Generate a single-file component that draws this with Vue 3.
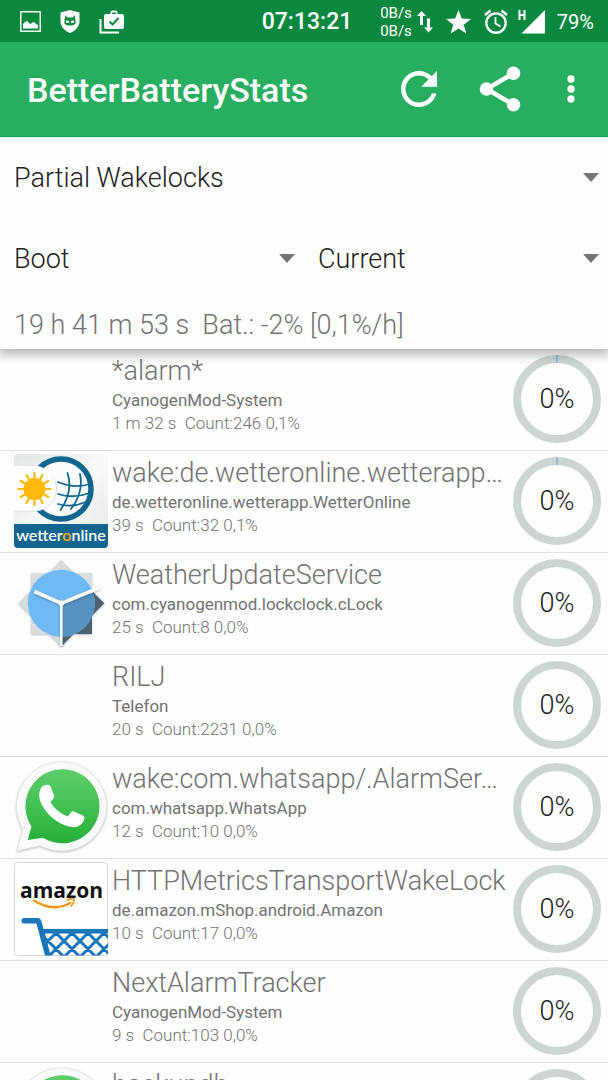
<script setup>
import { ref } from 'vue'

const stat = ref('Partial Wakelocks')
const from = ref('Boot')
const to = ref('Current')
const since = '19 h 41 m 53 s  Bat.: -2% [0,1%/h]'

const rows = [
  { title: '*alarm*', app: 'CyanogenMod-System', detail: '1 m 32 s  Count:246 0,1%', tick: true },
  { title: 'wake:de.wetteronline.wetterapp…', app: 'de.wetteronline.wetterapp.WetterOnline', detail: '39 s  Count:32 0,1%', icon: 'wetter', tick: true },
  { title: 'WeatherUpdateService', app: 'com.cyanogenmod.lockclock.cLock', detail: '25 s  Count:8 0,0%', icon: 'clock' },
  { title: 'RILJ', app: 'Telefon', detail: '20 s  Count:2231 0,0%' },
  { title: 'wake:com.whatsapp/.AlarmSer…', app: 'com.whatsapp.WhatsApp', detail: '12 s  Count:10 0,0%', icon: 'whatsapp' },
  { title: 'HTTPMetricsTransportWakeLock', app: 'de.amazon.mShop.android.Amazon', detail: '10 s  Count:17 0,0%', icon: 'amazon' },
  { title: 'NextAlarmTracker', app: 'CyanogenMod-System', detail: '9 s  Count:103 0,0%' },
  { title: 'backupdb', icon: 'whatsapp' },
]
const rays = Array.from({ length: 12 }, (_, i) => i * 30)
</script>

<template>
  <div class="screen">
    <div class="status">
      <div class="notes">
        <svg width="21" height="21" viewBox="0 0 21 21"><rect x=".8" y=".8" width="19.4" height="19.4" fill="none" stroke="#fff" stroke-width="1.4" /><path d="M3 17.500V13l2-2 2-1 3 3 2-1 2-1 2 2 2 1v3.500z" fill="#fff" /></svg>
        <svg width="20" height="23" viewBox="0 0 20 23"><path d="M10 0l9.500 2.500V11c0 5.500-4 10-9.500 12C4.500 21 .5 16.500.5 11V2.500z" fill="#fff" /><path d="M4.500 14V9.500L5.500 5l1.700 2.500h5.600L14.500 5l1 4.500V14q-5.500 3-11 0z" fill="#0b883f" /><path d="M6 10.300l3 .7v1.700H6zM14 10.300l-3 .7v1.700h3z" fill="#fff" /></svg>
        <svg width="26" height="24" viewBox="0 0 26 24"><path d="M1.500 9v13.500H20" fill="none" stroke="#fff" stroke-width="2" /><path fill-rule="evenodd" d="M7 4h4.500V2.500Q11.500.5 13.500.5h3q2 0 2 2V4H23q2 0 2 2v11q0 2-2 2H7q-2 0-2-2V6q0-2 2-2zm6.200 0h3.600V2.500h-3.600z" fill="#fff" /><path d="M10.500 11.500l3 3 6-6.500" fill="none" stroke="#0b883f" stroke-width="2" /></svg>
      </div>
      <time class="clock">07:13:21</time>
      <div class="system">
        <span class="speed">0B/s<br>0B/s</span>
        <svg class="arrows" width="16" height="22" viewBox="0 0 16 22"><path d="M4.500 0L9 5H6v9H3V5H0zM11.500 21.500L7 16.500h3v-9h3v9h3z" fill="#fff" /></svg>
        <svg class="star" width="25" height="24" viewBox="0 0 25 24"><path d="M12.500 0l3.300 8.600 9.200.4-7.200 5.700L20.200 23.500l-7.700-5.100-7.700 5.100 2.400-8.800L0 9l9.200-.4z" fill="#fff" /></svg>
        <svg class="alarm" width="24" height="25" viewBox="0 0 24 25"><circle cx="12" cy="14" r="9.700" fill="none" stroke="#fff" stroke-width="2.300" /><path d="M1 6l5.500-4.500M23 6l-5.500-4.500" stroke="#fff" stroke-width="2.300" /><path d="M11.500 8v6.500l5 3" fill="none" stroke="#fff" stroke-width="1.800" /></svg>
        <svg class="signal" width="28" height="25" viewBox="0 0 28 25"><path d="M27 1v23.500H3.500z" fill="#fff" /><path d="M1.500 1v10M6.500 1v10M1.500 6h5" fill="none" stroke="#fff" stroke-width="2" /></svg>
        <span class="level">79%</span>
      </div>
    </div>

    <header class="toolbar">
      <h1>BetterBatteryStats</h1>
      <button type="button" aria-label="Refresh"><svg width="54" height="54" viewBox="0 0 24 24"><path fill="#fff" d="M17.650 6.350C16.200 4.900 14.210 4 12 4c-4.420 0-7.990 3.580-7.990 8s3.570 8 7.990 8c3.730 0 6.840-2.550 7.730-6h-2.080c-.820 2.330-3.040 4-5.650 4-3.310 0-6-2.690-6-6s2.690-6 6-6c1.660 0 3.140.690 4.220 1.780L13 11h7V4l-2.350 2.350z" /></svg></button>
      <button type="button" aria-label="Share"><svg width="54" height="54" viewBox="0 0 24 24"><path d="M18 5L6 12l12 7" fill="none" stroke="#fff" stroke-width="2" /><g fill="#fff"><circle cx="18" cy="5" r="3" /><circle cx="6" cy="12" r="3" /><circle cx="18" cy="19" r="3" /></g></svg></button>
      <button type="button" class="more" aria-label="More options"><svg width="40" height="40" viewBox="0 0 24 24" fill="#fff"><circle cx="12" cy="6" r="2.200" /><circle cx="12" cy="12" r="2.200" /><circle cx="12" cy="18" r="2.200" /></svg></button>
    </header>

    <section class="filters">
      <label class="pick">
        <select v-model="stat" aria-label="Statistic"><option>Partial Wakelocks</option></select>
        <svg width="16" height="9" viewBox="0 0 16 9"><path d="M0 0h16L8 9z" fill="#757575" /></svg>
      </label>
      <div class="pair">
        <label class="pick">
          <select v-model="from" aria-label="From"><option>Boot</option></select>
          <svg width="16" height="9" viewBox="0 0 16 9"><path d="M0 0h16L8 9z" fill="#757575" /></svg>
        </label>
        <label class="pick">
          <select v-model="to" aria-label="To"><option>Current</option></select>
          <svg width="16" height="9" viewBox="0 0 16 9"><path d="M0 0h16L8 9z" fill="#757575" /></svg>
        </label>
      </div>
      <p class="since">{{ since }}</p>
    </section>

    <ul class="list">
      <li v-for="row in rows" :key="row.title" class="row">
        <div class="icon">
          <svg v-if="row.icon === 'wetter'" width="94" height="94" viewBox="0 0 94 94">
            <defs>
              <clipPath id="tile"><rect width="94" height="94" rx="4" /></clipPath>
              <linearGradient id="sky" x1="0" y1="0" x2="1" y2="1"><stop offset="0" stop-color="#e2e6e6" /><stop offset=".5" stop-color="#f8f9f9" /><stop offset="1" stop-color="#e6e9e9" /></linearGradient>
            </defs>
            <g clip-path="url(#tile)">
              <rect width="94" height="94" fill="url(#sky)" />
              <circle cx="47" cy="35" r="30" fill="#fbfcfc" stroke="#12658f" stroke-width="5.500" />
              <path d="M-2 13H20.500a22 22 0 0 1 0 44H-2z" fill="#fff" stroke="#dde1e1" stroke-width="1" />
              <path d="M-2 13.500H24q8 2 13 9" fill="none" stroke="#fff" stroke-width="3" />
              <g fill="none" stroke="#12658f" stroke-width="1.800" stroke-linecap="round">
                <path d="M53.500 19q6 18-7 37M66 20q4 18-9 35" />
                <path d="M44 28q16 7 32 2M44 40q15 5 32-1M44 50q14 4 28-2" />
              </g>
              <circle cx="20.500" cy="35" r="11" fill="#ffb90a" />
              <path v-for="a in rays" :key="a" d="M20.500 26V19" :transform="`rotate(${a} 20.500 35)`" stroke="#ffb90a" stroke-width="2.200" stroke-linecap="round" />
              <rect y="70" width="94" height="24" fill="#12658f" />
              <text x="47" y="87" class="wetter-name">wetter<tspan fill="#f5b013">o</tspan>nline</text>
            </g>
          </svg>

          <svg v-else-if="row.icon === 'clock'" width="94" height="94" viewBox="0 0 94 94">
            <defs><clipPath id="sector"><path d="M47.300 47.300L98 27v67H47.300z" /></clipPath></defs>
            <g class="lift"><path d="M47.300 4L90.300 47.300 47.300 90.500 4.300 47.300z" fill="#d7dbdc" /><rect x="17" y="17" width="61" height="61" fill="#d9ddde" /></g>
            <g clip-path="url(#sector)" fill="#4b626e"><path d="M47.300 4L90.300 47.300 47.300 90.500 4.300 47.300z" /><rect x="17" y="17" width="61" height="61" /></g>
            <circle cx="47.300" cy="47.300" r="33.500" fill="#6fb9f5" />
            <circle cx="47.300" cy="47.300" r="33.500" fill="#5693c3" clip-path="url(#sector)" />
            <g class="lift" stroke="#fafafa" fill="#fafafa"><path d="M20.500 35.500l26.800 11.800L86 31.500" fill="none" stroke-width="3.600" /><path d="M47.300 47.300V90" stroke-width="2.600" /><circle cx="47.300" cy="47.300" r="2.500" /></g>
          </svg>

          <svg v-else-if="row.icon === 'whatsapp'" width="94" height="94" viewBox="0 0 94 94">
            <defs><linearGradient id="green" x1="0" y1="0" x2="0" y2="1"><stop offset="0" stop-color="#5fcd6c" /><stop offset=".5" stop-color="#43c152" /><stop offset="1" stop-color="#25af3a" /></linearGradient></defs>
            <path class="lift" d="M3 91L8.700 69A45 44.500 0 1 1 26 85.500z" fill="#f9fafa" stroke="#dfe2e2" stroke-width=".7" />
            <path d="M13.700 80L17.500 66.500A37 37 0 1 1 29 77.700z" fill="url(#green)" />
            <path d="M29 26q2-1.500 5.500-1.200 1.500.2 2.300 2.200l3.300 8.500q.5 1.500-.7 3l-3 3.500q4.500 9 17.300 14.500l3.600-4.500q1.200-1.300 2.600-.6l9.500 4.300q1.500.8 1 2.300-.7 4-3.400 6.500-3.500 3-8 2.800-14-2-24-12.500-10.500-12-9.800-20 .3-6 3.800-8.800z" fill="#fff" />
          </svg>

          <svg v-else-if="row.icon === 'amazon'" width="94" height="94" viewBox="0 0 94 94">
            <defs><clipPath id="basket"><path d="M29 67h66v26.500H36z" /></clipPath></defs>
            <rect x=".5" y=".5" width="93" height="93" rx="3" fill="#fff" stroke="#d4d6d6" />
            <text x="47.500" y="36" class="amazon-name">amazon</text>
            <path d="M19 38q20 13 38 2.500" fill="none" stroke="#f7981d" stroke-width="2.400" />
            <path d="M52.500 38q7-2.500 7.500-.5t-3 7" fill="none" stroke="#f7981d" stroke-width="1.800" />
            <path d="M10 56h14q2.500 0 3.200 2.500L29.500 67H94v4.500H31L36.500 93.500H31L22.500 61.500H10q-2.500 0-2.500-2.700T10 56z" fill="#1976b8" />
            <g clip-path="url(#basket)" stroke="#1976b8" stroke-width="3">
              <path d="M6 67l28 28M22 67l28 28M38 67l28 28M54 67l28 28M70 67l28 28M86 67l28 28M46 67L18 95M62 67L34 95M78 67L50 95M94 67L66 95M110 67L82 95" fill="none" />
            </g>
          </svg>
        </div>
        <div class="text">
          <h2>{{ row.title }}</h2>
          <p v-if="row.app" class="app">{{ row.app }}</p>
          <p v-if="row.detail" class="detail">{{ row.detail }}</p>
        </div>
        <div class="gauge">
          <svg width="88" height="88" viewBox="0 0 88 88"><circle cx="44" cy="44" r="40" fill="none" stroke="#cdd5d4" stroke-width="8" /><path v-if="row.tick" d="M44 0v8" stroke="#84b4d6" stroke-width="1.500" /></svg>
          <span v-if="row.detail">0%</span>
        </div>
      </li>
    </ul>
  </div>
</template>

<style>
body { margin: 0; background: #fff; }
</style>

<style scoped>
.screen { height: 100vh; display: flex; flex-direction: column; overflow: hidden; background: #fefefe; color: #727272; font-family: Roboto, "Liberation Sans", sans-serif; }
svg { display: block; flex: none; }
h1, h2, p, ul { margin: 0; padding: 0; font-weight: 300; }

.status { flex: none; box-sizing: border-box; height: 42px; display: flex; align-items: center; justify-content: space-between; padding: 1px 14px 0; background: #0b883f; color: #fff; }
.notes { flex: 1; display: flex; align-items: center; gap: 19px; padding-left: 6px; }
.clock { font-size: 23px; font-weight: 500; line-height: 42px; }
.system { flex: 1; display: flex; align-items: center; justify-content: flex-end; }
.speed { font-size: 15px; line-height: 18px; }
.arrows { margin-left: 5px; }
.star { margin-left: 13px; }
.alarm { margin-left: 13px; }
.signal { margin-left: 10px; }
.level { margin-left: 11px; font-size: 20px; line-height: 42px; }

.toolbar { flex: none; position: relative; z-index: 2; height: 94px; display: flex; align-items: center; padding: 0 7px 0 27px; background: #28ae61; border-bottom: 1px solid #1e9c53; color: #fff; }
h1 { flex: 1; padding-top: 2px; font-size: 34px; line-height: 48px; font-weight: 500; }
button { width: 81px; height: 81px; display: flex; align-items: center; justify-content: center; padding: 0; border: 0; background: none; }
.more { width: 61px; }

.filters { flex: none; position: relative; z-index: 1; background: #fefefe; box-shadow: 0 4px 10px 2px rgba(0, 0, 0, .28); }
.pair { display: grid; grid-template-columns: 1fr 1fr; }
.pick { display: grid; align-items: center; }
.pick > * { grid-area: 1 / 1; }
.pick svg { justify-self: end; margin-right: 9px; pointer-events: none; }
select { appearance: none; width: 100%; height: 81px; padding: 0 30px 0 14px; border: 0; border-radius: 0; background: none; color: #212121; font: 300 27px Roboto, "Liberation Sans", sans-serif; }
.since { height: 50px; padding: 0 14px; font-size: 27px; line-height: 52px; white-space: pre; }

.list { flex: 1; min-height: 0; overflow: hidden; list-style: none; }
.row { height: 101px; display: flex; border-bottom: 1px solid #e2e2e2; }
.icon { flex: none; width: 94px; padding: 3px 4px 0 14px; }
.text { flex: 1; min-width: 0; padding-top: 5px; white-space: pre; }
h2 { font-size: 27px; line-height: 34px; }
.app { font-size: 17px; line-height: 24px; font-weight: 400; }
.detail { font-size: 17px; line-height: 23px; }
.gauge { flex: none; display: grid; place-items: center; align-content: start; padding: 6px 7px 0 0; }
.gauge > * { grid-area: 1 / 1; }
.gauge span { color: #212121; font-size: 27px; line-height: 88px; font-weight: 300; }

.lift { filter: drop-shadow(0 1px 1px rgba(0, 0, 0, .25)); }
.wetter-name { fill: #fff; font: 600 16px Lato, sans-serif; text-anchor: middle; }
.amazon-name { fill: #111; font: 700 21px "Open Sans", sans-serif; text-anchor: middle; }
</style>
